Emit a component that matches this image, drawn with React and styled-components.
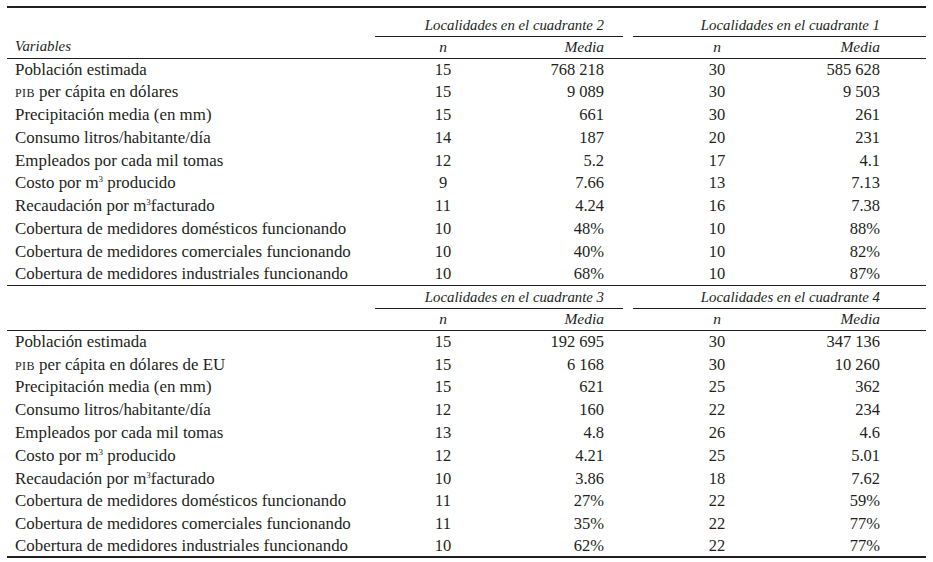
import styled, { createGlobalStyle } from 'styled-components';

const GlobalStyle = createGlobalStyle`
  body {
    margin: 0;
    background: #ffffff;
    color: #231f20;
    font-family: "Liberation Serif", "Times New Roman", serif;
  }
`;

const Page = styled.div`
  padding: 6px 7px 0 7px;
`;

const Table = styled.table`
  width: 919px;
  border-collapse: collapse;
  table-layout: fixed;
  font-size: 16.5px;
  td {
    padding: 0;
  }
`;

const Caps = styled.span`
  font-variant: small-caps;
  letter-spacing: 0.4px;
`;

const GroupRow = styled.tr`
  height: ${(p) => (p.$first ? '29px' : '22.5px')};
  border-top: ${(p) => (p.$first ? '2px' : '1px')} solid #231f20;
`;

const GroupTitle = styled.td`
  font-style: italic;
  font-size: 14.8px;
  text-align: right;
  vertical-align: bottom;
  padding-bottom: 2px !important;
  padding-right: ${(p) => p.$pad}px !important;
  border-bottom: 1px solid #231f20;
  line-height: 18px;
`;

const HeadRow = styled.tr`
  height: 22px;
  border-bottom: 1px solid #231f20;
  font-style: italic;
  font-size: 15.5px;
`;

const HeadLabel = styled.td`
  padding-left: 8px !important;
  font-size: 14.8px;
`;

const HeadN = styled.td`
  text-align: center;
`;

const HeadMedia = styled.td`
  text-align: right;
  padding-right: ${(p) => p.$pad}px !important;
`;

const DataRow = styled.tr`
  height: ${(p) => (p.$last && p.$closing ? '21.5px' : '22.8px')};
  border-bottom: ${(p) => (p.$last && p.$closing ? '2px solid #231f20' : 'none')};
`;

const Label = styled.td`
  padding-left: 8px !important;
  white-space: nowrap;
  font-size: 16.9px;
  sup {
    font-size: 9px;
    line-height: 0;
    vertical-align: 6px;
  }
`;

const NCell = styled.td`
  text-align: center;
`;

const MediaCell = styled.td`
  text-align: right;
  padding-right: ${(p) => p.$pad}px !important;
`;

const sections = [
  {
    groups: ['Localidades en el cuadrante 2', 'Localidades en el cuadrante 1'],
    showVariables: true,
    rows: [
      ['Población estimada', '15', '768 218', '30', '585 628'],
      [<><Caps>pib</Caps> per cápita en dólares</>, '15', '9 089', '30', '9 503'],
      ['Precipitación media (en mm)', '15', '661', '30', '261'],
      ['Consumo litros/habitante/día', '14', '187', '20', '231'],
      ['Empleados por cada mil tomas', '12', '5.2', '17', '4.1'],
      [<>Costo por m<sup>3</sup> producido</>, '9', '7.66', '13', '7.13'],
      [<>Recaudación por m<sup>3</sup>facturado</>, '11', '4.24', '16', '7.38'],
      ['Cobertura de medidores domésticos funcionando', '10', '48%', '10', '88%'],
      ['Cobertura de medidores comerciales funcionando', '10', '40%', '10', '82%'],
      ['Cobertura de medidores industriales funcionando', '10', '68%', '10', '87%'],
    ],
  },
  {
    groups: ['Localidades en el cuadrante 3', 'Localidades en el cuadrante 4'],
    showVariables: false,
    rows: [
      ['Población estimada', '15', '192 695', '30', '347 136'],
      [<><Caps>pib</Caps> per cápita en dólares de EU</>, '15', '6 168', '30', '10 260'],
      ['Precipitación media (en mm)', '15', '621', '25', '362'],
      ['Consumo litros/habitante/día', '12', '160', '22', '234'],
      ['Empleados por cada mil tomas', '13', '4.8', '26', '4.6'],
      [<>Costo por m<sup>3</sup> producido</>, '12', '4.21', '25', '5.01'],
      [<>Recaudación por m<sup>3</sup>facturado</>, '10', '3.86', '18', '7.62'],
      ['Cobertura de medidores domésticos funcionando', '11', '27%', '22', '59%'],
      ['Cobertura de medidores comerciales funcionando', '11', '35%', '22', '77%'],
      ['Cobertura de medidores industriales funcionando', '10', '62%', '22', '77%'],
    ],
  },
];

function App() {
  return (
    <>
      <GlobalStyle />
      <Page>
        <Table>
          <colgroup>
            <col style={{ width: 368 }} />
            <col style={{ width: 136 }} />
            <col style={{ width: 112 }} />
            <col style={{ width: 10 }} />
            <col style={{ width: 168 }} />
            <col style={{ width: 125 }} />
          </colgroup>
          {sections.map((section, si) => (
            <tbody key={si}>
              <GroupRow $first={si === 0}>
                <td />
                <GroupTitle colSpan={2} $pad={19}>{section.groups[0]}</GroupTitle>
                <td />
                <GroupTitle colSpan={2} $pad={46}>{section.groups[1]}</GroupTitle>
              </GroupRow>
              <HeadRow>
                <HeadLabel>{section.showVariables ? 'Variables' : ''}</HeadLabel>
                <HeadN>n</HeadN>
                <HeadMedia $pad={19}>Media</HeadMedia>
                <td />
                <HeadN>n</HeadN>
                <HeadMedia $pad={46}>Media</HeadMedia>
              </HeadRow>
              {section.rows.map((row, ri) => (
                <DataRow key={ri} $last={ri === section.rows.length - 1} $closing={si === sections.length - 1}>
                  <Label>{row[0]}</Label>
                  <NCell>{row[1]}</NCell>
                  <MediaCell $pad={19}>{row[2]}</MediaCell>
                  <td />
                  <NCell>{row[3]}</NCell>
                  <MediaCell $pad={46}>{row[4]}</MediaCell>
                </DataRow>
              ))}
            </tbody>
          ))}
        </Table>
      </Page>
    </>
  );
}

export default App;
